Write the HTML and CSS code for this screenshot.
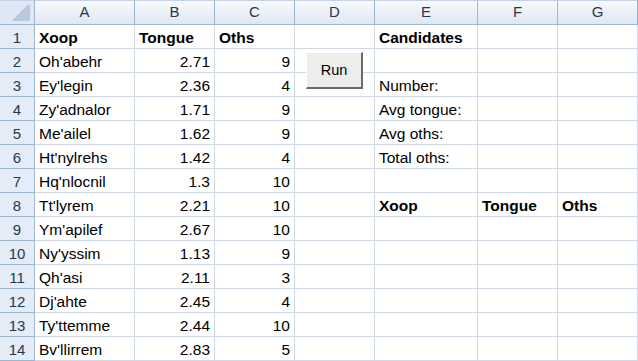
FILE: index.html
```html
<!DOCTYPE html>
<html lang="en">
  <head>
    <meta charset="UTF-8" />
    <title>Xoop sheet</title>
    <link rel="stylesheet" href="styles.css">
  </head>
  <body class="body">
    <div class="sheet">
      <div class="corner"></div>
      <div class="colhead">A</div>
      <div class="colhead">B</div>
      <div class="colhead">C</div>
      <div class="colhead">D</div>
      <div class="colhead">E</div>
      <div class="colhead">F</div>
      <div class="colhead">G</div>

      <div class="rowhead">1</div>
      <div class="cell bold">Xoop</div>
      <div class="cell bold">Tongue</div>
      <div class="cell bold">Oths</div>
      <div class="cell"></div>
      <div class="cell bold">Candidates</div>
      <div class="cell"></div>
      <div class="cell"></div>

      <div class="rowhead">2</div>
      <div class="cell">Oh'abehr</div>
      <div class="cell num">2.71</div>
      <div class="cell num">9</div>
      <div class="cell"></div>
      <div class="cell"></div>
      <div class="cell"></div>
      <div class="cell"></div>

      <div class="rowhead">3</div>
      <div class="cell">Ey'legin</div>
      <div class="cell num">2.36</div>
      <div class="cell num">4</div>
      <div class="cell"></div>
      <div class="cell">Number:</div>
      <div class="cell"></div>
      <div class="cell"></div>

      <div class="rowhead">4</div>
      <div class="cell">Zy'adnalor</div>
      <div class="cell num">1.71</div>
      <div class="cell num">9</div>
      <div class="cell"></div>
      <div class="cell">Avg tongue:</div>
      <div class="cell"></div>
      <div class="cell"></div>

      <div class="rowhead">5</div>
      <div class="cell">Me'ailel</div>
      <div class="cell num">1.62</div>
      <div class="cell num">9</div>
      <div class="cell"></div>
      <div class="cell">Avg oths:</div>
      <div class="cell"></div>
      <div class="cell"></div>

      <div class="rowhead">6</div>
      <div class="cell">Ht'nylrehs</div>
      <div class="cell num">1.42</div>
      <div class="cell num">4</div>
      <div class="cell"></div>
      <div class="cell">Total oths:</div>
      <div class="cell"></div>
      <div class="cell"></div>

      <div class="rowhead">7</div>
      <div class="cell">Hq'nlocnil</div>
      <div class="cell num">1.3</div>
      <div class="cell num">10</div>
      <div class="cell"></div>
      <div class="cell"></div>
      <div class="cell"></div>
      <div class="cell"></div>

      <div class="rowhead">8</div>
      <div class="cell">Tt'lyrem</div>
      <div class="cell num">2.21</div>
      <div class="cell num">10</div>
      <div class="cell"></div>
      <div class="cell bold">Xoop</div>
      <div class="cell bold">Tongue</div>
      <div class="cell bold">Oths</div>

      <div class="rowhead">9</div>
      <div class="cell">Ym'apilef</div>
      <div class="cell num">2.67</div>
      <div class="cell num">10</div>
      <div class="cell"></div>
      <div class="cell"></div>
      <div class="cell"></div>
      <div class="cell"></div>

      <div class="rowhead">10</div>
      <div class="cell">Ny'yssim</div>
      <div class="cell num">1.13</div>
      <div class="cell num">9</div>
      <div class="cell"></div>
      <div class="cell"></div>
      <div class="cell"></div>
      <div class="cell"></div>

      <div class="rowhead">11</div>
      <div class="cell">Qh'asi</div>
      <div class="cell num">2.11</div>
      <div class="cell num">3</div>
      <div class="cell"></div>
      <div class="cell"></div>
      <div class="cell"></div>
      <div class="cell"></div>

      <div class="rowhead">12</div>
      <div class="cell">Dj'ahte</div>
      <div class="cell num">2.45</div>
      <div class="cell num">4</div>
      <div class="cell"></div>
      <div class="cell"></div>
      <div class="cell"></div>
      <div class="cell"></div>

      <div class="rowhead">13</div>
      <div class="cell">Ty'ttemme</div>
      <div class="cell num">2.44</div>
      <div class="cell num">10</div>
      <div class="cell"></div>
      <div class="cell"></div>
      <div class="cell"></div>
      <div class="cell"></div>

      <div class="rowhead">14</div>
      <div class="cell">Bv'llirrem</div>
      <div class="cell num">2.83</div>
      <div class="cell num">5</div>
      <div class="cell"></div>
      <div class="cell"></div>
      <div class="cell"></div>
      <div class="cell"></div>

      <button class="run" type="button">Run</button>
    </div>
  </body>
</html>
```

FILE: styles.css
```css
.body {
  margin: 0;
  background-color: white;
  overflow: hidden;
  font-family: "Liberation Sans", Arial, sans-serif;
}
.sheet {
  position: relative;
  display: grid;
  grid-template-columns: 35px 100px 80px 80px 80px 103px 80px 80px;
  grid-template-rows: 25px repeat(14, 24px);
  width: 638px;
}
.corner {
  box-sizing: border-box;
  border-top: 1px solid #c5d3e6;
  border-right: 1px solid #9eb6ce;
  border-bottom: 1px solid #9eb6ce;
  background: linear-gradient(135deg, #dee7f3 55%, #b7c8df 55%);
  background-size: 24px 16px;
  background-position: 6px 4px;
  background-repeat: no-repeat;
  background-color: #dee7f3;
}
.colhead {
  box-sizing: border-box;
  border-top: 1px solid #c5d3e6;
  border-right: 1px solid #9eb6ce;
  border-bottom: 1px solid #9eb6ce;
  background: linear-gradient(#f7f9fc, #e0e7f1);
  color: #27384d;
  font-size: 15px;
  line-height: 22px;
  text-align: center;
}
.rowhead {
  box-sizing: border-box;
  border-right: 1px solid #9eb6ce;
  border-bottom: 1px solid #9eb6ce;
  background-color: #e4ecf7;
  color: #27384d;
  font-size: 15px;
  line-height: 21px;
  padding-top: 2px;
  text-align: center;
}
.cell {
  box-sizing: border-box;
  border-right: 1px solid #d0d7e5;
  border-bottom: 1px solid #d0d7e5;
  color: black;
  font-size: 15.5px;
  line-height: 21px;
  padding: 2px 4px 0 4px;
  white-space: nowrap;
}
.num {
  text-align: right;
}
.bold {
  font-weight: bold;
}
.run {
  position: absolute;
  left: 306px;
  top: 52px;
  width: 57px;
  height: 37px;
  box-sizing: border-box;
  padding: 0;
  border-top: 1px solid #ffffff;
  border-left: 1px solid #ffffff;
  border-right: 2px solid #6a6a6a;
  border-bottom: 2px solid #6a6a6a;
  background-color: #ededed;
  font-family: "Liberation Sans", Arial, sans-serif;
  font-size: 14.5px;
  color: black;
}
```
